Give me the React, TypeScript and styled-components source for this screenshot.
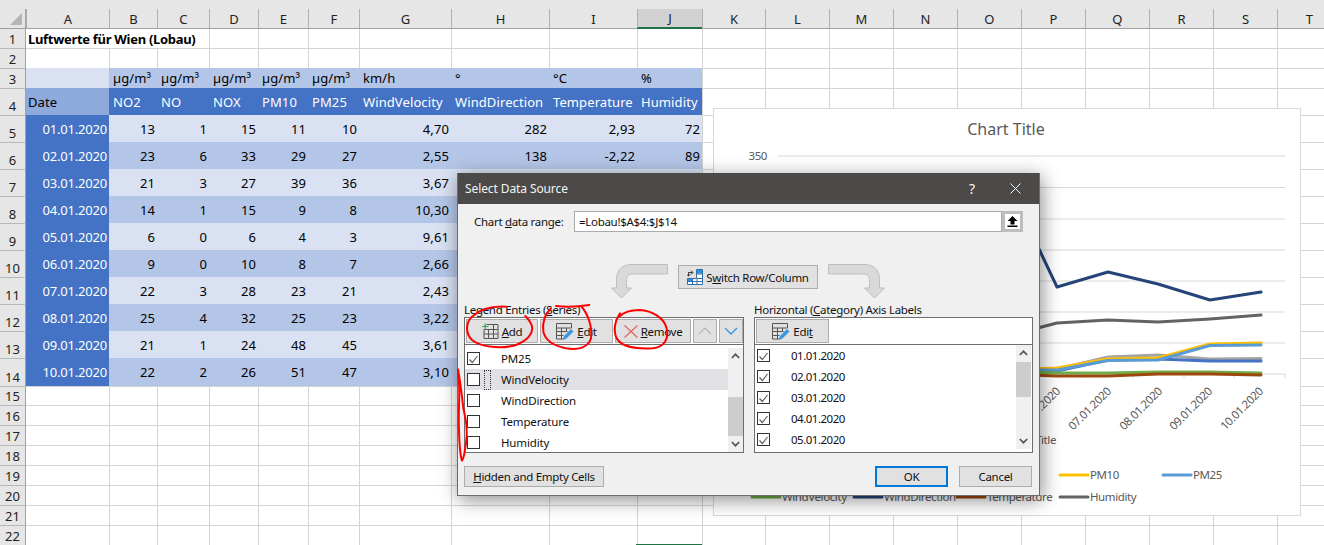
import React from 'react';
import styled, { createGlobalStyle } from 'styled-components';

const UI_FONT = '"Noto Sans", "Open Sans", sans-serif';

const GlobalStyle = createGlobalStyle`
  html, body {
    margin: 0;
    padding: 0;
    background: #fff;
    overflow: hidden;
  }
  body {
    font-family: ${UI_FONT};
    color: #000;
  }
`;

const COLUMN_WIDTHS = [83, 48, 52, 49, 50, 51, 92, 98, 88, 65, 63, 64, 64, 64, 64, 64, 64, 64, 64, 64];
const COLUMN_NAMES = 'ABCDEFGHIJKLMNOPQRST'.split('');
const ROW_HEIGHTS = [19, 20, 20, ...Array(10).fill(27), 28, 19, ...Array(7).fill(20)];

const UNITS = ['', 'µg/m³', 'µg/m³', 'µg/m³', 'µg/m³', 'µg/m³', 'km/h', '°', '°C', '%'];
const HEADERS = ['Date', 'NO2', 'NO', 'NOX', 'PM10', 'PM25', 'WindVelocity', 'WindDirection', 'Temperature', 'Humidity'];
const DATA = [
  ['01.01.2020', '13', '1', '15', '11', '10', '4,70', '282', '2,93', '72'],
  ['02.01.2020', '23', '6', '33', '29', '27', '2,55', '138', '-2,22', '89'],
  ['03.01.2020', '21', '3', '27', '39', '36', '3,67'],
  ['04.01.2020', '14', '1', '15', '9', '8', '10,30'],
  ['05.01.2020', '6', '0', '6', '4', '3', '9,61'],
  ['06.01.2020', '9', '0', '10', '8', '7', '2,66'],
  ['07.01.2020', '22', '3', '28', '23', '21', '2,43'],
  ['08.01.2020', '25', '4', '32', '25', '23', '3,22'],
  ['09.01.2020', '21', '1', '24', '48', '45', '3,61'],
  ['10.01.2020', '22', '2', '26', '51', '47', '3,10'],
];

const SERIES_ITEMS = ['PM25', 'WindVelocity', 'WindDirection', 'Temperature', 'Humidity'];
const AXIS_ITEMS = ['01.01.2020', '02.01.2020', '03.01.2020', '04.01.2020', '05.01.2020'];

type Tone = 'plain' | 'unit' | 'unitBlank' | 'head' | 'dateHead' | 'dateCell' | 'band1' | 'band2';

const TONES: Record<Tone, string> = {
  plain: '#fff',
  unit: '#b4c6e7',
  unitBlank: '#d9e1f2',
  head: '#4472c4',
  dateHead: '#8ea9db',
  dateCell: '#4472c4',
  band1: '#d9e1f2',
  band2: '#b4c6e7',
};

const Page = styled.div`
  position: relative;
  width: 1324px;
  height: 545px;
  overflow: hidden;
  background: #fff;
`;

const TopStrip = styled.div`
  height: 9px;
  background: #e6e6e6;
`;

const Sheet = styled.div`
  display: grid;
  grid-template-columns: 26px ${COLUMN_WIDTHS.map((w) => `${w}px`).join(' ')};
  grid-template-rows: 20px ${ROW_HEIGHTS.map((h) => `${h}px`).join(' ')};
  font-size: 13px;
  letter-spacing: 0.1px;
`;

const Corner = styled.div`
  position: relative;
  background: #e6e6e6;
  border-right: 1px solid #a0a0a0;
  border-bottom: 1px solid #a0a0a0;
  box-sizing: border-box;

  &::after {
    content: '';
    position: absolute;
    left: 10px;
    top: 4px;
    border-style: solid;
    border-width: 0 0 12px 12px;
    border-color: transparent transparent #b5b5b5 transparent;
  }
`;

const ColumnHeader = styled.div<{ $selected?: boolean }>`
  box-sizing: border-box;
  display: flex;
  align-items: center;
  justify-content: center;
  background: ${({ $selected }) => ($selected ? '#d2d2d2' : '#e6e6e6')};
  border-left: 1px solid #b0b0b0;
  border-bottom: ${({ $selected }) => ($selected ? '2px solid #217346' : '1px solid #a0a0a0')};
  color: #222;
`;

const RowHeader = styled.div<{ $first?: boolean }>`
  box-sizing: border-box;
  display: flex;
  align-items: flex-end;
  justify-content: center;
  background: #e6e6e6;
  border-right: 1px solid #a0a0a0;
  border-top: ${({ $first }) => ($first ? 'none' : '1px solid #b8b8b8')};
  color: #222;
  line-height: 17px;
`;

const Cell = styled.div<{ $tone: Tone; $right?: boolean; $first?: boolean; $startsRow?: boolean }>`
  box-sizing: border-box;
  display: flex;
  align-items: center;
  justify-content: ${({ $right }) => ($right ? 'flex-end' : 'flex-start')};
  padding: 0 2px 0 ${({ $tone }) => ($tone === 'dateHead' ? 2 : 4)}px;
  white-space: nowrap;
  background: ${({ $tone }) => TONES[$tone]};
  color: ${({ $tone }) => ($tone === 'head' || $tone === 'dateCell' ? '#fff' : '#000')};
  letter-spacing: ${({ $tone }) => ($tone === 'dateCell' ? '-0.2px' : 'inherit')};
  border-left: ${({ $tone, $startsRow }) => ($tone === 'plain' && !$startsRow ? '1px solid #d4d4d4' : 'none')};
  border-top: ${({ $tone, $first }) => ($tone === 'plain' && !$first ? '1px solid #d4d4d4' : 'none')};
`;

const TitleCell = styled.div`
  grid-column: span 3;
  display: flex;
  align-items: center;
  padding-left: 2px;
  font-weight: 700;
  font-size: 13px;
  letter-spacing: -0.3px;
  white-space: nowrap;
`;

const SelectionEdge = styled.div`
  position: absolute;
  left: 636px;
  top: 544px;
  width: 66px;
  height: 1px;
  background: #217346;
`;

const ChartFrame = styled.div`
  position: absolute;
  left: 713px;
  top: 108px;
  width: 588px;
  height: 408px;
  box-sizing: border-box;
  background: #fff;
  border: 1px solid #d9d9d9;
`;

const ChartSvg = styled.svg`
  display: block;
  font-family: ${UI_FONT};
  fill: #595959;
  font-size: 11.5px;
  letter-spacing: -0.4px;
`;

const ChartHeading = styled.text`
  font-size: 16px;
  letter-spacing: 0;
`;

const Dialog = styled.div`
  position: absolute;
  left: 457px;
  top: 173px;
  width: 583px;
  height: 323px;
  box-sizing: border-box;
  display: flex;
  flex-direction: column;
  background: #f0f0f0;
  border: 1px solid #6c6c6c;
  border-top: none;
  box-shadow: 2px 4px 18px rgba(0, 0, 0, 0.45);
  font-size: 11.5px;
  letter-spacing: -0.3px;
  color: #111;
`;

const TitleBar = styled.div`
  height: 31px;
  flex: none;
  display: flex;
  align-items: center;
  justify-content: space-between;
  padding: 0 18px 0 7px;
  background: #4b4a48;
  color: #f4f4f4;
  font-size: 12px;
  letter-spacing: -0.1px;
`;

const TitleActions = styled.div`
  display: flex;
  align-items: center;
  gap: 35px;
`;

const HelpMark = styled.span`
  font-size: 14px;
`;

const DialogBody = styled.div`
  flex: 1;
  display: flex;
  flex-direction: column;
  padding: 0 6px;
`;

const RangeRow = styled.div`
  display: flex;
  align-items: stretch;
  height: 21px;
  margin-top: 7px;
  padding-right: 10px;
`;

const RangeLabel = styled.label`
  width: 110px;
  box-sizing: border-box;
  padding-left: 10px;
  display: flex;
  align-items: center;
  white-space: pre;
`;

const RangeInput = styled.div`
  flex: 1;
  box-sizing: border-box;
  display: flex;
  align-items: center;
  padding-left: 4px;
  background: #fff;
  border: 1px solid #ababab;
`;

const CollapseButton = styled.div`
  width: 21px;
  box-sizing: border-box;
  display: flex;
  align-items: center;
  justify-content: center;
  background: #fff;
  border: 3px solid #bdbdbd;
`;

const SwitchRow = styled.div`
  display: flex;
  align-items: flex-start;
  gap: 10px;
  height: 35px;
  margin-top: 32px;
  margin-left: 147px;
`;

const DialogButton = styled.div<{ $width: number; $primary?: boolean }>`
  width: ${({ $width }) => $width}px;
  height: 21px;
  box-sizing: border-box;
  flex: none;
  display: flex;
  align-items: center;
  justify-content: center;
  gap: 3px;
  background: #e1e1e1;
  border: ${({ $primary }) => ($primary ? '2px solid #0078d7' : '1px solid #adadad')};
  white-space: pre;
`;

const SwitchButton = styled(DialogButton)`
  height: 24px;
  margin-top: 1px;
`;

const ToolButton = styled(DialogButton)`
  height: 24px;
`;

const Panels = styled.div`
  display: grid;
  grid-template-columns: 280px 279px;
  gap: 10px;
  margin-top: 3px;
`;

const Panel = styled.div`
  display: flex;
  flex-direction: column;
  min-width: 0;
`;

const PanelLabel = styled.div`
  height: 15px;
  line-height: 15px;
  white-space: pre;
`;

const ListBox = styled.div`
  height: 136px;
  box-sizing: border-box;
  display: flex;
  flex-direction: column;
  background: #fff;
  border: 1px solid #6e6e6e;
`;

const Toolbar = styled.div`
  height: 27px;
  flex: none;
  box-sizing: border-box;
  display: flex;
  gap: 2px;
  padding: 1px 1px 0;
  border-bottom: 1px solid #6e6e6e;
`;

const ListArea = styled.div<{ $inset?: number }>`
  flex: 1;
  display: flex;
  min-height: 0;
  padding-right: ${({ $inset }) => $inset ?? 0}px;
`;

const Items = styled.div<{ $offset: number; $tight?: boolean }>`
  flex: 1;
  padding-top: ${({ $offset }) => $offset}px;
  letter-spacing: ${({ $tight }) => ($tight ? '-0.5px' : '-0.15px')};
`;

const Item = styled.div<{ $active?: boolean }>`
  height: 21px;
  display: flex;
  align-items: center;
  padding-left: 2px;
  background: ${({ $active }) => ($active ? '#e0e0e5' : 'transparent')};
`;

const CheckBox = styled.div`
  width: 13px;
  height: 13px;
  box-sizing: border-box;
  flex: none;
  background: #fff;
  border: 1px solid #333;
`;

const FocusMark = styled.div<{ $show?: boolean }>`
  width: 7px;
  height: 20px;
  box-sizing: border-box;
  flex: none;
  margin: 0 10px 0 4px;
  border: 1px dotted ${({ $show }) => ($show ? '#333' : 'transparent')};
`;

const ScrollBar = styled.div<{ $offset: number }>`
  width: 15px;
  height: 104px;
  flex: none;
  display: flex;
  flex-direction: column;
  margin-top: ${({ $offset }) => $offset}px;
  background: #f0f0f0;
`;

const ScrollArrow = styled.div`
  height: 16px;
  flex: none;
  display: flex;
  align-items: center;
  justify-content: center;
`;

const ScrollTrack = styled.div<{ $before: number }>`
  flex: 1;
  padding-top: ${({ $before }) => $before}px;
`;

const ScrollThumb = styled.div<{ $size: number }>`
  height: ${({ $size }) => $size}px;
  background: #cdcdcd;
`;

const Footer = styled.div`
  display: flex;
  justify-content: space-between;
  margin-top: 13px;
`;

const FooterActions = styled.div`
  display: flex;
  gap: 11px;
  padding-right: 1px;
`;

const ArrowSvg = styled.svg<{ $flip?: boolean }>`
  flex: none;
  transform: ${({ $flip }) => ($flip ? 'scaleX(-1)' : 'none')};
`;

const InkLayer = styled.svg`
  position: absolute;
  left: 0;
  top: 0;
  pointer-events: none;
`;

const AddIcon = () => (
  <svg width="17" height="16" viewBox="0 0 17 16" fill="none">
    <path d="M4.5 1.5h11.5v14h-14v-9M2 6.5h14M2 11h14M6.5 6.5v9M11.5 2v13.5" stroke="#555" />
    <path d="M0 3.5h6.5M3.2 0.5v6.5" stroke="#33a457" strokeWidth="1.2" />
  </svg>
);

const EditIcon = () => (
  <svg width="18" height="17" viewBox="0 0 18 17" fill="none">
    <path d="M.5 .5h15v4.5H.5zM.5 5v11h8M5.5 5v11M10.5 5v4M.5 8.5h11M.5 12.5h7" stroke="#555" />
    <path d="M7 16.5l1-3.5 7-7 2.5 2.5-7 7z" fill="#3d95dc" />
  </svg>
);

const RemoveIcon = () => (
  <svg width="14" height="13" viewBox="0 0 14 13" fill="none">
    <path d="M.5 .5l13 12M13.5 .5l-13 12" stroke="#e6605c" strokeWidth="1.1" />
  </svg>
);

const SwitchIcon = () => (
  <svg width="16" height="16" viewBox="0 0 16 16" fill="none">
    <path d="M9.5 .5h6v15H.5V9.5h9z" fill="#fff" stroke="#2f6ea8" />
    <path d="M10 1h5v3.5h-5zM1 10h4.5v2.5H1z" fill="#2f8ed8" />
    <path d="M10 9.5v6M5.5 9.5v6M10 5h6M10 9.5h6M1 12.5h15" stroke="#2f6ea8" />
    <path d="M1.5 7V3.5h4M4 1.5l2 2-2 2M.2 5.5l1.3 1.7 1.3-1.7" stroke="#333" />
  </svg>
);

const UpChevron = ({ color }: { color: string }) => (
  <svg width="14" height="8" viewBox="0 0 14 8" fill="none">
    <path d="M1 7l6-6 6 6" stroke={color} strokeWidth="1.2" />
  </svg>
);

const DownChevron = ({ color }: { color: string }) => (
  <svg width="14" height="8" viewBox="0 0 14 8" fill="none">
    <path d="M1 1l6 6 6-6" stroke={color} strokeWidth="1.4" />
  </svg>
);

const SmallArrow = ({ down }: { down?: boolean }) => (
  <svg width="9" height="6" viewBox="0 0 9 6" fill="none">
    <path d={down ? 'M.8 1l3.7 3.7L8.200 1' : 'M.8 5l3.7-3.700L8.200 5'} stroke="#555" strokeWidth="1.7" />
  </svg>
);

const CheckedBox = () => (
  <CheckBox>
    <svg width="11" height="11" viewBox="0 0 11 11" fill="none">
      <path d="M1.500 5.500l2.800 3 5.200-6.500" stroke="#606060" strokeWidth="1.200" />
    </svg>
  </CheckBox>
);

const UploadGlyph = () => (
  <svg width="11" height="11" viewBox="0 0 11 11">
    <path d="M5.500 0L10.500 5H7.500V8.500H3.500V5H.5zM.5 9.500h10V11H.5z" fill="#000" />
  </svg>
);

const BentArrow = ({ flip }: { flip?: boolean }) => (
  <ArrowSvg $flip={flip} width="57" height="35" viewBox="0 0 57 35">
    <path
      d="M56.500 .5H21C11 .5 5.500 6 5.500 15.500V24H.5l10 10 10-10h-5v-8c0-4 2-6 6-6h35z"
      fill="#d9d9d9"
      stroke="#bdbdbd"
    />
  </ArrowSvg>
);

const SheetGrid = () => {
  const rows: React.ReactNode[] = [];
  rows.push(<Corner key="corner" />);
  COLUMN_NAMES.forEach((name) => {
    rows.push(
      <ColumnHeader key={name} $selected={name === 'J'}>
        {name}
      </ColumnHeader>,
    );
  });

  ROW_HEIGHTS.forEach((_, r) => {
    const rowNumber = r + 1;
    rows.push(
      <RowHeader key={`row-${rowNumber}`} $first={rowNumber === 1}>
        {rowNumber}
      </RowHeader>,
    );
    COLUMN_NAMES.forEach((name, c) => {
      const key = `${name}${rowNumber}`;
      if (rowNumber === 1 && c === 0) {
        rows.push(<TitleCell key={key}>Luftwerte für Wien (Lobau)</TitleCell>);
      } else if (rowNumber === 1 && c < 3) {
        // covered by the title cell, which spans A to C
      } else if (rowNumber === 3 && c < 10) {
        rows.push(
          <Cell key={key} $tone={c === 0 ? 'unitBlank' : 'unit'}>
            {UNITS[c]}
          </Cell>,
        );
      } else if (rowNumber === 4 && c < 10) {
        rows.push(
          <Cell key={key} $tone={c === 0 ? 'dateHead' : 'head'}>
            {HEADERS[c]}
          </Cell>,
        );
      } else if (rowNumber >= 5 && rowNumber <= 14 && c < 10) {
        const tone: Tone = c === 0 ? 'dateCell' : rowNumber % 2 === 1 ? 'band1' : 'band2';
        rows.push(
          <Cell key={key} $tone={tone} $right>
            {DATA[rowNumber - 5][c]}
          </Cell>,
        );
      } else {
        rows.push(<Cell key={key} $tone="plain" $first={rowNumber === 1} $startsRow={c === 0} />);
      }
    });
  });

  return <Sheet>{rows}</Sheet>;
};

const GRID_YS = [156, 187.500, 219, 250, 281, 312, 343, 374];
const TICK_XS = [778, 829, 880, 931, 981, 1032, 1083, 1133, 1184, 1234, 1285];
const LABEL_XS: [string, number][] = [
  ['06.01.2020', 1061],
  ['07.01.2020', 1112],
  ['08.01.2020', 1163],
  ['09.01.2020', 1213],
  ['10.01.2020', 1264],
];
const POINT_XS = [1030, 1057, 1108, 1158, 1210, 1261];

const LINES: { color: string; ys: number[] }[] = [
  { color: '#a5a5a5', ys: [371, 369, 357, 355, 359, 358.500] },
  { color: '#4472c4', ys: [372, 371, 360, 359, 361, 361] },
  { color: '#ffc000', ys: [369, 368, 359, 358, 344, 343] },
  { color: '#5b9bd5', ys: [370, 370, 360.500, 360, 345.500, 345] },
  { color: '#70ad47', ys: [372, 373, 373, 372, 372, 373] },
  { color: '#264478', ys: [230, 287, 272, 284, 300, 292] },
  { color: '#9e480e', ys: [375, 376, 376, 374, 374, 375] },
  { color: '#636363', ys: [330, 323, 320, 322, 319, 315] },
];

const LEGEND: { color: string; label: string; x: number; y: number }[] = [
  { color: '#ffc000', label: 'PM10', x: 1060, y: 475 },
  { color: '#5b9bd5', label: 'PM25', x: 1163, y: 475 },
  { color: '#70ad47', label: 'WindVelocity', x: 752, y: 497 },
  { color: '#264478', label: 'WindDirection', x: 854, y: 497 },
  { color: '#9e480e', label: 'Temperature', x: 957, y: 497 },
  { color: '#636363', label: 'Humidity', x: 1060, y: 497 },
];

const Chart = () => (
  <ChartFrame>
    <ChartSvg width="586" height="406" viewBox="714 109 586 406">
      <ChartHeading x="1006" y="135" textAnchor="middle">
        Chart Title
      </ChartHeading>
      <text x="767" y="160" textAnchor="end">
        350
      </text>
      {GRID_YS.map((y) => (
        <line key={y} x1="778" x2="1285" y1={y} y2={y} stroke="#d9d9d9" />
      ))}
      {TICK_XS.map((x) => (
        <line key={x} x1={x} x2={x} y1="374" y2="378" stroke="#d9d9d9" />
      ))}
      {LINES.map((line) => (
        <polyline
          key={line.color}
          points={line.ys.map((y, i) => `${POINT_XS[i]},${y}`).join(' ')}
          fill="none"
          stroke={line.color}
          strokeWidth="3"
          strokeLinejoin="round"
          strokeLinecap="round"
        />
      ))}
      {LABEL_XS.map(([label, x]) => (
        <text key={label} x={x} y="392" textAnchor="end" transform={`rotate(-45 ${x} 392)`}>
          {label}
        </text>
      ))}
      <text x="1056" y="444" textAnchor="end">
        Axis Title
      </text>
      {LEGEND.map((entry) => (
        <g key={entry.label}>
          <line
            x1={entry.x}
            x2={entry.x + 28}
            y1={entry.y}
            y2={entry.y}
            stroke={entry.color}
            strokeWidth="3"
            strokeLinecap="round"
          />
          <text x={entry.x + 30} y={entry.y + 4}>
            {entry.label}
          </text>
        </g>
      ))}
    </ChartSvg>
  </ChartFrame>
);

const SelectDataSource = () => (
  <Dialog>
    <TitleBar>
      <span>Select Data Source</span>
      <TitleActions>
        <HelpMark>?</HelpMark>
        <svg width="11" height="11" viewBox="0 0 11 11" fill="none">
          <path d="M.5 .5l10 10M10.500 .5l-10 10" stroke="#f4f4f4" />
        </svg>
      </TitleActions>
    </TitleBar>
    <DialogBody>
      <RangeRow>
        <RangeLabel>
          <span>
            Chart <u>d</u>ata range:
          </span>
        </RangeLabel>
        <RangeInput>=Lobau!$A$4:$J$14</RangeInput>
        <CollapseButton>
          <UploadGlyph />
        </CollapseButton>
      </RangeRow>
      <SwitchRow>
        <BentArrow />
        <SwitchButton $width={140}>
          <SwitchIcon />
          <span>
            S<u>w</u>itch Row/Column
          </span>
        </SwitchButton>
        <BentArrow flip />
      </SwitchRow>
      <Panels>
        <Panel>
          <PanelLabel>
            Legend Entries (<u>S</u>eries)
          </PanelLabel>
          <ListBox>
            <Toolbar>
              <ToolButton $width={72}>
                <AddIcon />
                <span>
                  <u>A</u>dd
                </span>
              </ToolButton>
              <ToolButton $width={73}>
                <EditIcon />
                <span>
                  <u>E</u>dit
                </span>
              </ToolButton>
              <ToolButton $width={76}>
                <RemoveIcon />
                <span>
                  <u>R</u>emove
                </span>
              </ToolButton>
              <ToolButton $width={24}>
                <UpChevron color="#b5b5b5" />
              </ToolButton>
              <ToolButton $width={24}>
                <DownChevron color="#3a96dd" />
              </ToolButton>
            </Toolbar>
            <ListArea>
              <Items $offset={3}>
                {SERIES_ITEMS.map((item, i) => (
                  <Item key={item} $active={i === 1}>
                    {i === 0 ? <CheckedBox /> : <CheckBox />}
                    <FocusMark $show={i === 1} />
                    <span>{item}</span>
                  </Item>
                ))}
              </Items>
              <ScrollBar $offset={3}>
                <ScrollArrow>
                  <SmallArrow />
                </ScrollArrow>
                <ScrollTrack $before={33}>
                  <ScrollThumb $size={39} />
                </ScrollTrack>
                <ScrollArrow>
                  <SmallArrow down />
                </ScrollArrow>
              </ScrollBar>
            </ListArea>
          </ListBox>
        </Panel>
        <Panel>
          <PanelLabel>
            Horizontal (<u>C</u>ategory) Axis Labels
          </PanelLabel>
          <ListBox>
            <Toolbar>
              <ToolButton $width={73}>
                <EditIcon />
                <span>
                  Edi<u>t</u>
                </span>
              </ToolButton>
            </Toolbar>
            <ListArea $inset={1}>
              <Items $offset={0} $tight>
                {AXIS_ITEMS.map((item) => (
                  <Item key={item}>
                    <CheckedBox />
                    <FocusMark />
                    <span>{item}</span>
                  </Item>
                ))}
              </Items>
              <ScrollBar $offset={0}>
                <ScrollArrow>
                  <SmallArrow />
                </ScrollArrow>
                <ScrollTrack $before={1}>
                  <ScrollThumb $size={35} />
                </ScrollTrack>
                <ScrollArrow>
                  <SmallArrow down />
                </ScrollArrow>
              </ScrollBar>
            </ListArea>
          </ListBox>
        </Panel>
      </Panels>
      <Footer>
        <DialogButton $width={140}>
          <span>
            <u>H</u>idden and Empty Cells
          </span>
        </DialogButton>
        <FooterActions>
          <DialogButton $width={73} $primary>
            OK
          </DialogButton>
          <DialogButton $width={73}>Cancel</DialogButton>
        </FooterActions>
      </Footer>
    </DialogBody>
  </Dialog>
);

const RedInk = () => (
  <InkLayer width="1324" height="545" viewBox="0 0 1324 545" fill="none">
    <g stroke="#ff0000" strokeWidth="6" strokeLinecap="round" strokeLinejoin="round">
      <g transform="translate(456 170) scale(0.3333)">
        <path d="M150 410C110 408 72 418 48 440C28 460 28 490 48 510C75 532 135 538 180 525C215 512 232 490 228 470C225 455 215 445 208 438" />
        <path d="M400 405C370 410 330 412 300 408M375 408C395 430 410 470 405 505C398 530 370 542 330 535C295 528 268 512 262 485C258 455 270 430 285 415" />
        <path d="M492 430C478 450 470 480 482 505C495 530 540 538 590 535C625 532 640 505 632 475C625 445 590 422 550 420C525 420 505 425 490 440" />
      </g>
      <g transform="translate(456 340) scale(0.3333)">
        <path d="M6 88C14 130 18 170 22 205C30 240 36 270 30 310C26 340 22 358 18 362C12 345 10 310 9 270C6 220 12 170 9 130C8 110 6 95 6 88Z" />
      </g>
    </g>
  </InkLayer>
);

const App: React.FC = () => (
  <Page>
    <GlobalStyle />
    <TopStrip />
    <SheetGrid />
    <SelectionEdge />
    <Chart />
    <SelectDataSource />
    <RedInk />
  </Page>
);

export default App;
